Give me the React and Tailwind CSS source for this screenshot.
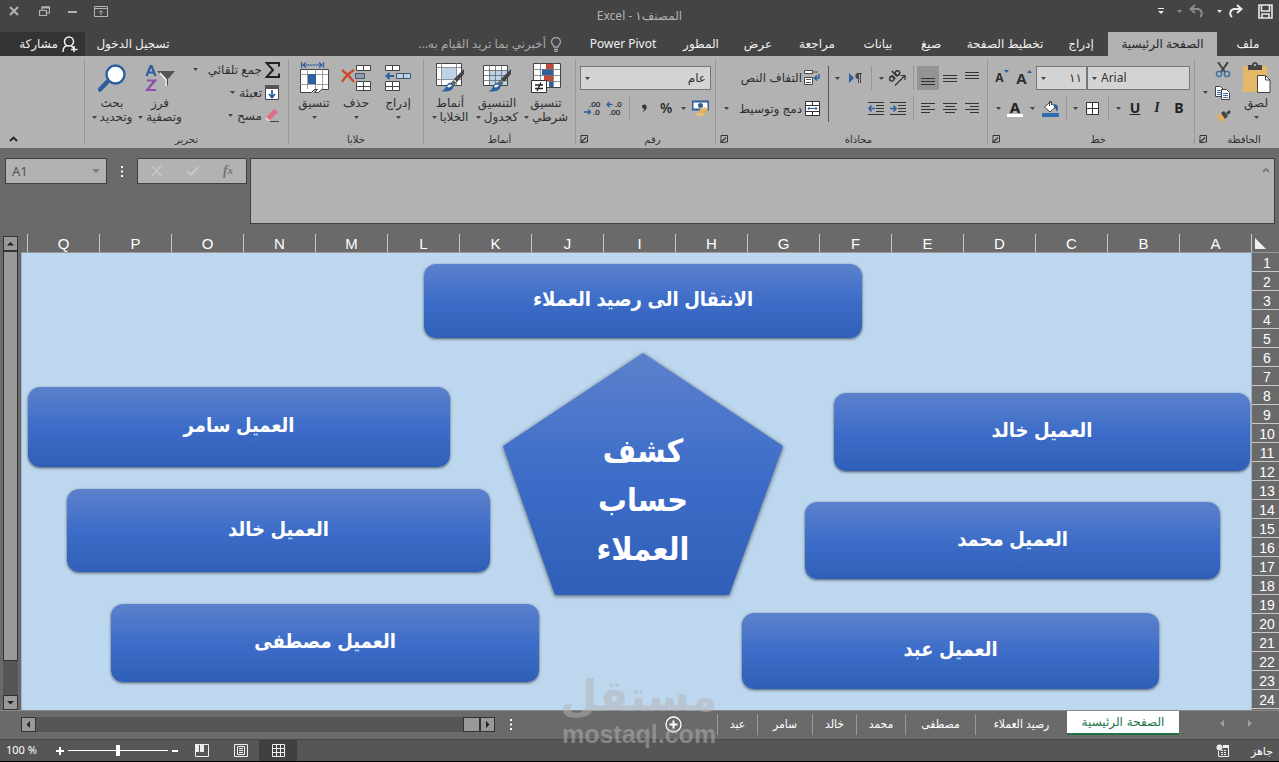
import React from "react";

const Svg = ({ w, h, children, className = "" }) => (
  <svg width={w} height={h} viewBox={`0 0 ${w} ${h}`} className={`block shrink-0 ${className}`} aria-hidden="true">
    {children}
  </svg>
);

const Caret = ({ className = "text-[#444]" }) => (
  <Svg w={5} h={3} className={className}>
    <path d="M0 0h5L2.5 3z" fill="currentColor" />
  </Svg>
);

const Btn = ({ label, className = "", children, ...rest }) => (
  <button type="button" aria-label={label} className={`flex shrink-0 items-center justify-center ${className}`} {...rest}>
    {children}
  </button>
);

const Sep = ({ className = "h-6" }) => (
  <div className="flex w-2 shrink-0 justify-center">
    <div className={`w-px bg-[#959595] ${className}`} />
  </div>
);

/* ---------- ribbon icons ---------- */

const PasteIcon = () => (
  <Svg w={29} h={32}>
    <path d="M1 4h24v26H1z" fill="#e3b867" />
    <path d="M6 3h4c0-4 6-4 6 0h4v5H6z" fill="#444" />
    <circle cx="13" cy="3" r="1.2" fill="#b2b2b2" />
    <path d="M15.500 13.500h8l4.500 4.500v12.500h-12.500z" fill="#fff" stroke="#444" />
    <path d="M23.500 13.500v4.500h4.500" fill="none" stroke="#444" />
  </Svg>
);

const CutIcon = () => (
  <Svg w={16} h={16}>
    <path d="M3 0l7 10M13 0L6 10" stroke="#444" strokeWidth="2" fill="none" />
    <circle cx="4" cy="12" r="2.600" fill="none" stroke="#3a6ea5" strokeWidth="1.400" />
    <circle cx="12" cy="12" r="2.600" fill="none" stroke="#3a6ea5" strokeWidth="1.400" />
  </Svg>
);

const CopyIcon = () => (
  <Svg w={16} h={14}>
    <path d="M.5.500h5l3 3v7h-8z" fill="#fff" stroke="#444" />
    <path d="M2 4.500h4M2 6.500h4M2 8.500h4" stroke="#3a6ea5" />
    <path d="M6.500 3.500h5l3 3v7h-8z" fill="#fff" stroke="#444" />
    <path d="M8 7.500h5M8 9.500h5M8 11.500h5" stroke="#3a6ea5" />
  </Svg>
);

const PainterIcon = () => (
  <Svg w={16} h={14}>
    <path d="M1 6l5-1 4 5-4 4c-1-3-3-5-5-8z" fill="#e3b060" />
    <path d="M6 4l3-2 4 5-3 3z" fill="#444" />
    <path d="M11 4l3-3 2 2-3 3z" fill="#444" />
  </Svg>
);

const FillIcon = () => (
  <Svg w={17} h={17}>
    <path d="M0 13h17v4H0z" fill="#2e6db0" />
    <path d="M2.500 7L8 2l5.500 5L8 12z" fill="#fff" stroke="#444" />
    <path d="M7.500 6V1.500a1.500 1.500 0 0 1 2 0V5" fill="none" stroke="#444" />
    <path d="M12 4c4 0 5 4 3 8-1-3-2-4-3-5z" fill="#2e5e98" />
  </Svg>
);

const BordersIcon = () => (
  <Svg w={13} h={13}>
    <path d="M.5.500h12v12H.5zM6.500 0v13M0 6.500h13" fill="#fff" stroke="#333" />
  </Svg>
);

const LINE_SETS = {
  top: [[0, 14, 1], [0, 14, 4], [0, 14, 7]],
  middle: [[0, 14, 4], [0, 14, 7], [0, 14, 10]],
  bottom: [[0, 14, 7], [0, 14, 10], [0, 14, 13]],
  right: [[0, 14, 2], [5, 14, 5], [0, 14, 8], [5, 14, 11]],
  center: [[0, 14, 2], [2, 12, 5], [0, 14, 8], [2, 12, 11]],
  left: [[0, 14, 2], [0, 9, 5], [0, 14, 8], [0, 9, 11]],
};

const LinesIcon = ({ kind }) => (
  <Svg w={14} h={14}>
    {LINE_SETS[kind].map(([a, b, y]) => (
      <path key={y} d={`M${a} ${y}.5H${b}`} stroke="#333" />
    ))}
  </Svg>
);

const IndentIcon = ({ out }) => (
  <Svg w={16} h={13}>
    <path d="M0 .5h16M8 3.500h8M8 6.500h8M8 9.500h8M0 12.500h16" stroke="#333" />
    <path d={out ? "M3.500 3.500L1 6.500l2.500 3M1 6.500h6" : "M3.500 3.500L6 6.500l-2.500 3M6 6.500H0"} fill="none" stroke="#2b5f9e" strokeWidth="1.600" />
  </Svg>
);

const OrientIcon = () => (
  <Svg w={17} h={16}>
    <g transform="rotate(-45 7 8)" fill="none" stroke="#333" strokeWidth="1.500">
      <circle cx="3.500" cy="5.500" r="2.200" />
      <path d="M6 3v5M9 0v8" />
      <circle cx="11.500" cy="5.500" r="2.200" />
    </g>
    <path d="M6 15.500L15.500 6M11.500 5.500H16V10" fill="none" stroke="#333" strokeWidth="1.200" />
  </Svg>
);

const RtlIcon = () => (
  <Svg w={13} h={10}>
    <path d="M0 0l5 5-5 5z" fill="#2b5f9e" />
    <path d="M9 0h4v1h-1v9h-1V1h-1v9H9V6C5.500 6 5.500 0 9 0z" fill="#444" />
  </Svg>
);

const WrapIcon = () => (
  <Svg w={16} h={16}>
    <path d="M.5.500h8v3h-8zM.5 7.500h8v7h-8z" fill="#fff" stroke="#444" />
    <path d="M2 9.500h5M2 12.500h5" stroke="#555" />
    <path d="M9 2h5" stroke="#555" />
    <path d="M15 4v4h-4M13 5.500L10.500 8l2.500 2.500" fill="none" stroke="#2b5f9e" strokeWidth="1.500" />
  </Svg>
);

const MergeIcon = () => (
  <Svg w={15} h={15}>
    <path d="M.5.500h14v14H.5zM.5 4.500h14M.5 10.500h14M7.500 0v4M7.500 11v4" fill="#fff" stroke="#333" />
    <path d="M3 7.500h9M4.500 6L3 7.500 4.500 9M10.500 6L12 7.500 10.500 9" fill="none" stroke="#2b5f9e" />
  </Svg>
);

const MoneyIcon = () => (
  <Svg w={17} h={17}>
    <path d="M.5 1.500h16v8H.5z" fill="#fff" stroke="#2e5e98" strokeWidth="2" />
    <circle cx="8.500" cy="5.500" r="2.500" fill="#2e5e98" />
    <ellipse cx="12" cy="9" rx="4" ry="1.800" fill="#e8bd7a" />
    <ellipse cx="11" cy="11.500" rx="4.500" ry="1.800" fill="#dfae67" />
    <ellipse cx="8" cy="14.500" rx="4.500" ry="1.800" fill="#e8bd7a" />
  </Svg>
);

const DecIcon = ({ less }) => (
  <Svg w={16} h={15} className="overflow-visible">
    <g direction="ltr" fontFamily="Liberation Sans, sans-serif" fontSize="8" fill="#222" stroke="#222" strokeWidth=".2">
      <text x={less ? 9 : 5} y="6">{less ? ".0" : ".00"}</text>
      <text x={less ? 3 : 9} y="14">{less ? ".00" : ".0"}</text>
    </g>
    <path
      d={less ? "M3.500 1L1 3.500 3.500 6M1 3.500h5.500" : "M4 8.500L6.500 11 4 13.500M6.500 11H0"}
      fill="none" stroke="#2b5f9e" strokeWidth="1.300"
    />
  </Svg>
);

const Brush = () => (
  <>
    <path d="M29 6v5l-7 8-3-3z" fill="#444" />
    <path d="M18.500 17l3 3-2.500 2.500-3-3z" fill="#666" />
    <path d="M6 28c5 0 4-6 8-8 3-1 6 2 4 5-2 4-8 4-12 3z" fill="#2b5f9e" />
    <path d="M12 24c1-3 3-3 5-2-1 2-3 3-5 2z" fill="#fff" />
  </>
);

const CondIcon = () => (
  <Svg w={30} h={30}>
    <path d="M2.500.500h27v24h-27z" fill="#fff" stroke="#444" />
    <path d="M15 1h7v5h-7zM13 12h9v6h-9z" fill="#c0483a" />
    <path d="M11 6h11v6H11zM18 18h4v6h-4z" fill="#2b5f9e" />
    <path d="M9.500 0v24M22.500 0v24M2 6.500h27M2 12.500h27M2 18.500h27" stroke="#777" strokeWidth=".8" />
    <path d="M.5 17.500h15v12H.5z" fill="#fff" stroke="#333" />
    <path d="M4 22h8M4 25.500h8M10 19.500L6 28" stroke="#222" strokeWidth="1.300" />
  </Svg>
);

const TableStyleIcon = () => (
  <Svg w={30} h={30}>
    <path d="M1.500 2.500h24v20h-24z" fill="#fff" stroke="#444" />
    <path d="M7 7h18v15H7z" fill="#bcd2e8" />
    <path d="M7.500 2v20M13.500 2v20M19.500 2v20M1 7.500h24M1 12.500h24M1 17.500h24" stroke="#666" strokeWidth=".8" />
    <Brush />
  </Svg>
);

const CellStyleIcon = () => (
  <Svg w={30} h={30}>
    <path d="M1.500.500h25v22h-25z" fill="#fff" stroke="#444" />
    <path d="M6.500 0v22M21.500 0v22M1 4.500h25M1 16.500h25" stroke="#777" strokeWidth=".8" />
    <path d="M7 5h14v11H7z" fill="#bcd2e8" />
    <Brush />
  </Svg>
);

const InsertIcon = () => (
  <Svg w={27} h={28}>
    <path d="M.5 1.500h14v5h-14zM7.500 1v6M.5 17.500h14v9h-14zM7.500 17v10M0 22.500h15" fill="#fff" stroke="#444" />
    <path d="M11.500 9.500h14v5h-14zM18.500 9v6" fill="#bcd2e8" stroke="#456" />
    <path d="M4.500 9L1.500 12l3 3M1.500 12H9" fill="none" stroke="#2b5f9e" strokeWidth="1.800" />
  </Svg>
);

const DeleteIcon = () => (
  <Svg w={30} h={28}>
    <path d="M15.500 1.500h14v5h-14zM22.500 1v6M15.500 17.500h14v9h-14zM22.500 17v10M15 22.500h15" fill="#fff" stroke="#444" />
    <path d="M14.500 9.500h9v5h-9z" fill="#8c9eb0" stroke="#456" />
    <path d="M1 6c4 3 9 8 12 12M13 6C8 9 4 13 1 18" fill="none" stroke="#cc4a28" strokeWidth="2.200" />
  </Svg>
);

const FormatIcon = () => (
  <Svg w={29} h={32}>
    <path d="M1.500 0v6M23.500 0v6M3 3h19M6 .5L3 3l3 2.500M19 .5L22 3l-3 2.500" fill="none" stroke="#2b5f9e" strokeWidth="1.200" />
    <path d="M.5 7.500h28v20h-7l-3 3h-4l3-3h-3l-3 3h-11z" fill="#fff" stroke="#444" />
    <path d="M7.500 7v20M15.500 7v20M22.500 7v20M0 12.500h28M0 22.500h28" stroke="#888" strokeWidth=".8" />
    <path d="M8 12h8v10H8z" fill="#2b5f9e" />
  </Svg>
);

const SigmaIcon = () => (
  <Svg w={15} h={16}>
    <path d="M14 4.500V1H1.500L8 8l-6.500 7H14v-3.500" fill="none" stroke="#222" strokeWidth="2" />
  </Svg>
);

const FillDownIcon = () => (
  <Svg w={14} h={15}>
    <path d="M.5 1.500h13v13H.5z" fill="#fff" stroke="#444" />
    <path d="M0 0h14v4H0z" fill="#555" />
    <path d="M7 5v7M4 9l3 3.500L10 9" fill="none" stroke="#2b5f9e" strokeWidth="1.800" />
  </Svg>
);

const EraserIcon = () => (
  <Svg w={14} h={13}>
    <path d="M1 8L9 0l4 3-8 8z" fill="#dc7088" />
    <path d="M1 8l4 3-1.500 1.500L0 10z" fill="#f0c4cc" />
    <path d="M5 12.500h9" stroke="#444" />
  </Svg>
);

const SortIcon = () => (
  <Svg w={30} h={28}>
    <path d="M1.500 12L5.500 2h1l4 10M3 8.500h6" fill="none" stroke="#2b5f9e" strokeWidth="2.200" />
    <path d="M2 16.500h8L2 26h9" fill="none" stroke="#8a4fa8" strokeWidth="2.200" />
    <path d="M12 7h18l-7 8v7l-3-2v-5z" fill="#555" />
    <path d="M15 9l6 6.500V22" fill="none" stroke="#fff" strokeWidth="1.500" />
  </Svg>
);

const FindIcon = () => (
  <Svg w={28} h={28}>
    <path d="M11 16L2 25.500" stroke="#2b5f9e" strokeWidth="4.500" strokeLinecap="round" />
    <circle cx="17.500" cy="10.500" r="9" fill="#fff" stroke="#2b5f9e" strokeWidth="2.400" />
  </Svg>
);

const Launcher = () => (
  <Btn label="خيارات إضافية" className="size-3">
    <Svg w={8} h={8}>
      <path d="M1 3V.5h6.500V7H5" fill="none" stroke="#333" />
      <path d="M6 2.500L2 6.500M1 3.500V7.500H5" fill="none" stroke="#333" strokeWidth="1.200" />
    </Svg>
  </Btn>
);

/* ---------- ribbon building blocks ---------- */

const Group = ({ title, width, launcher, children }) => (
  <section aria-label={title} className={`flex shrink-0 flex-col ${width}`}>
    <div className="flex grow">
      <div className="flex min-w-0 grow flex-col">
        <div className="flex h-[74px] pt-[2px]">{children}</div>
        <div className="flex h-[18px] items-center">
          <span className="grow text-center text-[10px] leading-4">{title}</span>
          {launcher && <span className="me-[2px] w-3 shrink-0"><Launcher /></span>}
        </div>
      </div>
      <div className="my-1 w-px shrink-0 bg-[#979797]" />
    </div>
  </section>
);

const Big = ({ icon, lines, caret, width }) => (
  <button type="button" className={`flex shrink-0 flex-col items-center pt-[2px] font-['DejaVu_Sans',sans-serif] leading-[14px] ${width}`}>
    <span className="flex h-9 items-center justify-center pb-px">{icon}</span>
    <span className="h-[14px] whitespace-nowrap">{lines[0]}</span>
    <span className="flex h-[14px] items-center gap-[3px] whitespace-nowrap">
      {lines[1]}
      {caret && <Caret />}
    </span>
  </button>
);

const Row = ({ icon, label, caret, far }) => (
  <button type="button" className="flex h-[23px] items-center gap-[2px] whitespace-nowrap leading-4">
    <span className="flex w-4 justify-center">{icon}</span>
    <span>{label}</span>
    {caret && <span className={far ? "ps-2" : "ps-[2px]"}><Caret /></span>}
  </button>
);

const Picker = ({ label, value, width, dir }) => (
  <div dir="ltr" className={`flex h-6 shrink-0 items-center border border-[#777] bg-[#d4d4d4] ${width}`}>
    <span className="ps-1"><Caret /></span>
    <select
      aria-label={label}
      dir={dir}
      defaultValue={value}
      className="h-full min-w-0 grow appearance-none bg-transparent px-1 text-xs leading-4 text-[#333] outline-none"
    >
      <option>{value}</option>
    </select>
  </div>
);

const RIBBON_TABS = [
  ["ملف", "w-[62px]"],
  ["الصفحة الرئيسية", "w-[109px] bg-[#b2b2b2] text-[#262626]"],
  ["إدراج", "w-[54px]"],
  ["تخطيط الصفحة", "w-[98px]"],
  ["صيغ", "w-[50px]"],
  ["بيانات", "w-[56px]"],
  ["مراجعة", "w-[66px]"],
  ["عرض", "w-[52px]"],
  ["المطور", "w-[62px]"],
  ["Power Pivot", "w-[94px]"],
];

function TitleBar() {
  return (
    <header className="flex h-8 items-start justify-between px-2 text-[#e8e8e8]">
      <div className="flex h-[22px] w-32 items-center">
        <Btn label="حفظ" className="w-3 grow-0">
          <Svg w={15} h={15}>
            <path d="M1 1h13v13H1zM3.500 1v6h8V1M4 14v-4h7v4" fill="none" stroke="currentColor" strokeWidth="1.600" />
          </Svg>
        </Btn>
        <Btn label="إعادة" className="ms-[14px] w-5">
          <Svg w={16} h={14}>
            <path d="M14 5H7a4.500 4.500 0 0 0-2 8M10 1l4.500 4L10 9" fill="none" stroke="currentColor" strokeWidth="2" />
          </Svg>
        </Btn>
        <Btn label="خيارات الإعادة" className="ms-[2px] w-2"><Caret className="text-[#e8e8e8]" /></Btn>
        <Btn label="تراجع" className="ms-[6px] w-6 text-[#8c8c8c]">
          <Svg w={16} h={14}>
            <path d="M2 5h7a4.500 4.500 0 0 1 2 8M6 1L1.500 5 6 9" fill="none" stroke="currentColor" strokeWidth="2" />
          </Svg>
        </Btn>
        <Btn label="خيارات التراجع" className="ms-[2px] w-2"><Caret className="text-[#8c8c8c]" /></Btn>
        <Btn label="تخصيص شريط الأدوات" className="ms-2 w-3">
          <Svg w={6} h={7}>
            <path d="M0 .5h6" stroke="currentColor" />
            <path d="M0 3h6L3 6z" fill="currentColor" />
          </Svg>
        </Btn>
      </div>
      <h1 className="pt-2 text-xs leading-4 text-[#b4b4b4]">المصنف١ - Excel</h1>
      <div className="flex h-[22px] w-32 items-center justify-end gap-[14px] text-[#b4b4b4]">
        <Btn label="خيارات عرض الشريط">
          <Svg w={14} h={11}>
            <path d="M.5.500h13v10H.5zM0 2.500h14M7 9V4.500M5 6.500l2-2 2 2" fill="none" stroke="currentColor" />
          </Svg>
        </Btn>
        <Btn label="تصغير" className="w-4">
          <Svg w={9} h={3}><path d="M0 2h9" stroke="currentColor" strokeWidth="2" /></Svg>
        </Btn>
        <Btn label="استعادة" className="w-3">
          <Svg w={11} h={10}>
            <path d="M.5 4.500h7v5h-7zM3 4V.8h7.500V7H8M3 2h7" fill="none" stroke="currentColor" strokeWidth="1.200" />
          </Svg>
        </Btn>
        <Btn label="إغلاق" className="ms-1 w-3">
          <Svg w={10} h={10}><path d="M1 1l8 8M9 1L1 9" stroke="currentColor" strokeWidth="2" /></Svg>
        </Btn>
      </div>
    </header>
  );
}

function TabStrip() {
  return (
    <nav className="flex h-6 text-xs text-[#f0f0f0]">
      {RIBBON_TABS.map(([name, cls]) => (
        <button type="button" key={name} className={`shrink-0 pb-px whitespace-nowrap leading-4 ${cls}`}>{name}</button>
      ))}
      <button type="button" className="ms-[14px] flex items-center gap-1 whitespace-nowrap text-[#a8a8a8]">
        <Svg w={12} h={15}>
          <path d="M4 10c0-2-2.500-2.500-2.500-5a4.500 4.500 0 0 1 9 0c0 2.500-2.500 3-2.500 5zM4 12.500h4M4.500 14.500h3" fill="none" stroke="currentColor" strokeWidth="1.300" />
        </Svg>
        أخبرني بما تريد القيام به...
      </button>
      <span className="grow" />
      <button type="button" className="w-[84px] whitespace-nowrap leading-4">تسجيل الدخول</button>
      <button type="button" className="ms-[6px] flex w-[85px] items-center justify-center gap-1 bg-[#333] ps-2 pe-5 whitespace-nowrap">
        <Svg w={16} h={17}>
          <circle cx="7" cy="5.500" r="4.500" fill="none" stroke="currentColor" strokeWidth="1.500" />
          <path d="M1 16c0-4 2-6 4-6.500M9 9.500l3 3M12 10v6M9 13.500h6.500" fill="none" stroke="currentColor" strokeWidth="1.500" />
        </Svg>
        مشاركة
      </button>
    </nav>
  );
}

function Ribbon() {
  return (
    <div className="flex h-[92px] bg-[#b2b2b2] text-xs text-[#303030]">
      <Group title="الحافظة" width="w-[85px]" launcher>
        <Big icon={<PasteIcon />} lines={["لصق", ""]} caret width="w-[46px]" />
        <div className="flex flex-col">
          <Btn label="قص" className="h-[23px] w-5"><CutIcon /></Btn>
          <div className="flex h-[23px]">
            <Btn label="نسخ" className="w-5"><CopyIcon /></Btn>
            <Btn label="خيارات النسخ" className="w-4"><Caret /></Btn>
          </div>
          <Btn label="نسخ التنسيق" className="h-[23px] w-5"><PainterIcon /></Btn>
        </div>
      </Group>

      <Group title="خط" width="w-[207px]" launcher>
        <div className="flex grow flex-col ps-1 pt-2">
          <div className="flex">
            <Picker label="خط" value="Arial" width="w-[103px]" dir="ltr" />
            <Picker label="حجم الخط" value="١١" width="w-[51px]" dir="rtl" />
            <Btn label="تكبير الخط" dir="ltr" className="w-6 items-start">
              <span className="pt-1 text-[15px] font-bold leading-4">A</span>
              <Svg w={5} h={3} className="mt-1"><path d="M0 3h5L2.500 0z" fill="#2b5f9e" /></Svg>
            </Btn>
            <Btn label="تصغير الخط" dir="ltr" className="w-5 items-start">
              <span className="pt-1 text-xs font-bold leading-4">A</span>
              <Svg w={5} h={3} className="mt-1"><path d="M0 0h5L2.500 3z" fill="#2b5f9e" /></Svg>
            </Btn>
          </div>
          <div className="flex h-6 pt-[6px] pb-0 text-sm leading-6 text-[#222] [&>button]:h-6">
            <Btn label="غامق" className="w-[22px] font-bold">B</Btn>
            <Btn label="مائل" className="w-[22px] font-['Liberation_Serif',serif] font-bold italic">I</Btn>
            <Btn label="تسطير" className="w-[22px] font-bold underline">U</Btn>
            <Btn label="خيارات التسطير" className="w-3"><Caret /></Btn>
            <Sep />
            <Btn label="حدود" className="w-6"><BordersIcon /></Btn>
            <Btn label="خيارات الحدود" className="w-[10px]"><Caret /></Btn>
            <Sep />
            <Btn label="لون التعبئة" className="w-6"><FillIcon /></Btn>
            <Btn label="خيارات التعبئة" className="w-3"><Caret /></Btn>
            <Btn label="لون الخط" className="w-[22px] flex-col">
              <span className="text-[15px] font-bold leading-[14px]">A</span>
              <span className="h-[3px] w-4 bg-white" />
            </Btn>
            <Btn label="خيارات لون الخط" className="w-3"><Caret /></Btn>
          </div>
        </div>
      </Group>

      <Group title="محاذاة" width="w-[272px]" launcher>
        <div className="flex w-[155px] shrink-0 flex-col ps-1 pt-2">
          <div className="flex h-6">
            <Btn label="محاذاة لأعلى" className="w-[22px]"><LinesIcon kind="top" /></Btn>
            <Btn label="محاذاة للوسط عموديا" className="w-[22px]"><LinesIcon kind="middle" /></Btn>
            <Btn label="محاذاة لأسفل" className="w-[22px] bg-[#949494]"><LinesIcon kind="bottom" /></Btn>
            <Sep />
            <Btn label="الاتجاه" className="w-6"><OrientIcon /></Btn>
            <Btn label="خيارات الاتجاه" className="w-2"><Caret /></Btn>
            <Sep className="ms-1 h-6" />
            <Btn label="من اليمين إلى اليسار" className="w-6 ps-1"><RtlIcon /></Btn>
            <Btn label="خيارات اتجاه النص" className="w-4"><Caret /></Btn>
          </div>
          <div className="mt-[6px] flex h-6">
            <Btn label="محاذاة لليمين" className="w-[22px]"><LinesIcon kind="right" /></Btn>
            <Btn label="توسيط" className="w-[22px]"><LinesIcon kind="center" /></Btn>
            <Btn label="محاذاة لليسار" className="w-[22px]"><LinesIcon kind="left" /></Btn>
            <Sep />
            <Btn label="زيادة المسافة البادئة" className="w-[22px]"><IndentIcon /></Btn>
            <Btn label="إنقاص المسافة البادئة" className="w-[22px]"><IndentIcon out /></Btn>
          </div>
        </div>
        <div className="flex w-2 justify-center pt-2"><div className="h-14 w-px bg-[#555]" /></div>
        <div className="flex flex-col gap-2 ps-1 pt-2">
          <Row icon={<WrapIcon />} label="التفاف النص" />
          <Row icon={<MergeIcon />} label="دمج وتوسيط" caret far />
        </div>
      </Group>

      <Group title="رقم" width="w-[140px]" launcher>
        <div className="flex grow flex-col ps-1 pt-2">
          <Picker label="تنسيق الأرقام" value="عام" width="w-[131px]" dir="rtl" />
          <div className="mt-[6px] flex h-6">
            <Btn label="تنسيق العملة" className="w-[22px]"><MoneyIcon /></Btn>
            <Btn label="خيارات العملة" className="w-3"><Caret /></Btn>
            <Btn label="نمط النسبة المئوية" className="w-[22px] text-sm font-semibold">%</Btn>
            <Btn label="نمط الفاصلة" className="w-[22px]">
              <Svg w={5} h={8}><path d="M0 2.500a2.300 2.300 0 1 1 4.600.5C4.600 5.500 3 7 .5 8 1.800 6.800 2.300 5.800 2.300 4.800A2.300 2.300 0 0 1 0 2.500z" fill="#333" /></Svg>
            </Btn>
            <Sep />
            <Btn label="إنقاص المنازل العشرية" className="w-[22px]"><DecIcon less /></Btn>
            <Btn label="زيادة المنازل العشرية" className="w-[22px]"><DecIcon /></Btn>
          </div>
        </div>
      </Group>

      <Group title="أنماط" width="w-[152px]">
        <Big icon={<CondIcon />} lines={["تنسيق", "شرطي"]} caret width="ms-1 w-[50px]" />
        <Big icon={<TableStyleIcon />} lines={["التنسيق", "كجدول"]} caret width="w-12" />
        <Big icon={<CellStyleIcon />} lines={["أنماط", "الخلايا"]} caret width="w-[46px]" />
      </Group>

      <Group title="خلايا" width="w-[135px]">
        <Big icon={<InsertIcon />} lines={["إدراج", ""]} caret width="ms-1 w-[42px]" />
        <Big icon={<DeleteIcon />} lines={["حذف", ""]} caret width="w-[42px]" />
        <Big icon={<FormatIcon />} lines={["تنسيق", ""]} caret width="w-[42px]" />
      </Group>

      <Group title="تحرير" width="w-[204px]">
        <div className="flex w-[104px] shrink-0 flex-col ps-2">
          <Row icon={<SigmaIcon />} label="جمع تلقائي" caret far />
          <Row icon={<FillDownIcon />} label="تعبئة" caret />
          <Row icon={<EraserIcon />} label="مسح" caret />
        </div>
        <Big icon={<SortIcon />} lines={["فرز", "وتصفية"]} caret width="w-12" />
        <Big icon={<FindIcon />} lines={["بحث", "وتحديد"]} caret width="w-12" />
      </Group>

      <div className="flex grow items-end justify-end px-2 pb-1">
        <Btn label="طي الشريط" className="size-[10px]">
          <Svg w={9} h={6}><path d="M1 5l3.500-3.500L8 5" fill="none" stroke="#222" strokeWidth="1.800" /></Svg>
        </Btn>
      </div>
    </div>
  );
}

const Dots = () => (
  <Svg w={2} h={11} className="text-white">
    <path d="M0 0h2v2H0zM0 4.500h2v2H0zM0 9h2v2H0z" fill="currentColor" />
  </Svg>
);

function FormulaBar() {
  return (
    <div dir="ltr" className="flex h-[86px] items-start pt-[10px] pr-1 pl-[5px]">
      <div className="flex h-[26px] w-[102px] shrink-0 items-center border border-[#3f3f3f] bg-[#b2b2b2] pr-[6px]">
        <input aria-label="Name Box" defaultValue="A1" className="h-full min-w-0 grow bg-transparent px-[6px] text-[13px] text-[#555] outline-none" />
        <Svg w={8} h={4}><path d="M0 0h8L4 4z" fill="#7d7d7d" /></Svg>
      </div>
      <div className="flex h-[26px] w-[30px] items-center justify-center"><Dots /></div>
      <div className="flex h-[26px] w-[110px] shrink-0 items-center border border-[#3f3f3f] bg-[#b2b2b2]">
        <Btn label="Cancel" className="w-9">
          <Svg w={11} h={10}><path d="M1 0l9 10M10 0L1 10" stroke="#c6c6c6" strokeWidth="1.800" /></Svg>
        </Btn>
        <Btn label="Enter" className="w-9">
          <Svg w={13} h={10}><path d="M1 5l4 4 7-8" fill="none" stroke="#c6c6c6" strokeWidth="2.400" /></Svg>
        </Btn>
        <Btn label="Insert Function" className="w-9 font-['Liberation_Serif',serif] text-sm font-bold text-[#757575] italic">
          f<span className="text-[11px]">x</span>
        </Btn>
      </div>
      <div className="ml-[3px] flex h-[66px] grow items-start border border-[#3f3f3f] bg-[#b2b2b2]">
        <textarea aria-label="Formula" className="h-full grow resize-none bg-transparent px-2 py-1 text-xs outline-none" />
        <Btn label="Collapse formula bar" className="mt-2 mr-1">
          <Svg w={8} h={6}><path d="M1 5l3-3 3 3" fill="none" stroke="#777" strokeWidth="1.800" /></Svg>
        </Btn>
      </div>
    </div>
  );
}

const COLUMNS = "ABCDEFGHIJKLMNOPQ".split("");
const ROWS = Array.from({ length: 24 }, (_, i) => i + 1);

const SHAPES = [
  ["الانتقال الى رصيد العملاء", "top-[11px] right-[389px] h-[74px] w-[438px]"],
  ["العميل سامر", "top-[134px] right-[801px] h-[80px] w-[422px]"],
  ["العميل خالد", "top-[236px] right-[761px] h-[83px] w-[423px]"],
  ["العميل مصطفى", "top-[351px] right-[712px] h-[78px] w-[428px]"],
  ["العميل خالد", "top-[140px] right-[1px] h-[78px] w-[416px]"],
  ["العميل محمد", "top-[249px] right-[31px] h-[77px] w-[415px]"],
  ["العميل عبد", "top-[360px] right-[92px] h-[76px] w-[417px]"],
];

const ScrollButton = ({ label, d }) => (
  <Btn label={label} className="size-[15px] border border-[#333] bg-[#999]">
    <Svg w={7} h={7}><path d={d} fill="#222" /></Svg>
  </Btn>
);

function Sheet() {
  return (
    <main className="flex grow font-['Liberation_Sans','DejaVu_Sans_Condensed','DejaVu_Sans',sans-serif] text-[15px] text-white">
      <div className="flex min-w-0 grow flex-col">
        <div className="flex h-[19px] border-b border-[#999]">
          <Btn label="تحديد الكل" className="w-[27px] justify-end pe-[3px]">
            <Svg w={11} h={11}><path d="M0 0v11h11z" fill="#f0f0f0" /></Svg>
          </Btn>
          <div className="flex min-w-0 grow overflow-hidden border-s border-[#c8c8c8]">
            {COLUMNS.map((c) => (
              <div key={c} className="w-[72px] shrink-0 border-e border-[#c8c8c8] text-center leading-5">{c}</div>
            ))}
          </div>
        </div>
        <div className="flex grow">
          <div className="w-[27px] shrink-0 text-sm">
            {ROWS.map((r) => (
              <div key={r} className="h-[19px] border-b border-[#c8c8c8] pe-[3px] text-center leading-5">{r}</div>
            ))}
          </div>
          <div className="relative grow overflow-hidden border-x border-[#9fb3c4] bg-[#bdd7ee]">
            {SHAPES.map(([text, cls], i) => (
              <a
                key={i}
                href="#sheet"
                className={`absolute flex items-center justify-center rounded-xl bg-linear-to-b from-[#5c81cc] via-[#3d6dc8] to-[#2f5fb8] pb-1 text-[20px] font-bold whitespace-nowrap shadow-[0_1px_3px_rgba(0,0,0,0.6)] ${cls}`}
              >
                {text}
              </a>
            ))}
            <a href="#sheet" className="absolute top-[98px] right-[466px] h-[250px] w-[284px]">
              <svg viewBox="0 0 284 250" className="absolute inset-0 size-full drop-shadow-[0_1px_2px_rgba(0,0,0,0.6)]" aria-hidden="true">
                <defs>
                  <linearGradient id="pent" x1="0" y1="0" x2="0" y2="1">
                    <stop offset="0" stopColor="#5c81cc" />
                    <stop offset=".5" stopColor="#3d6dc8" />
                    <stop offset="1" stopColor="#2f5fb8" />
                  </linearGradient>
                </defs>
                <path d="M142 2l140 93-54 149H54L2 95z" fill="url(#pent)" />
              </svg>
              <span className="relative flex flex-col items-center pt-[76px] text-[32px] leading-[49px] font-bold">
                <span>كشف</span>
                <span>حساب</span>
                <span>العملاء</span>
              </span>
            </a>
          </div>
        </div>
      </div>
      <div className="flex w-[21px] shrink-0 flex-col items-center pt-[2px]">
        <div className="flex w-[15px] grow flex-col bg-[#565656]">
          <ScrollButton label="تمرير لأعلى" d="M0 5.500L3.500 2 7 5.500z" />
          <div className="h-[410px] border border-[#333] bg-[#999]" />
          <span className="grow" />
          <ScrollButton label="تمرير لأسفل" d="M0 2L3.500 5.500 7 2z" />
        </div>
      </div>
    </main>
  );
}

const SHEET_TABS = [
  ["رصيد العملاء", "w-[92px]"],
  ["مصطفى", "w-[70px]"],
  ["محمد", "w-[49px]"],
  ["خالد", "w-[44px]"],
  ["سامر", "w-[55px]"],
  ["عبد", "w-[40px]"],
];

function SheetTabs() {
  return (
    <nav className="flex h-[29px] border-t border-[#888] font-['Noto_Sans','DejaVu_Sans_Condensed','DejaVu_Sans',sans-serif] text-xs text-white">
      <div className="flex w-[100px] shrink-0 items-center justify-center gap-6 pe-[14px] pb-1">
        <Btn label="السابق"><Svg w={4} h={7}><path d="M0 0v7l4-3.500z" fill="#a0a0a0" /></Svg></Btn>
        <Btn label="التالي"><Svg w={4} h={7}><path d="M4 0v7L0 3.500z" fill="#a0a0a0" /></Svg></Btn>
      </div>
      <button type="button" className="h-6 w-[112px] shrink-0 border-b-2 border-[#217346] bg-white font-['DejaVu_Sans',sans-serif] leading-4 whitespace-nowrap text-[#217346]">
        الصفحة الرئيسية
      </button>
      {SHEET_TABS.map(([name, cls]) => (
        <button type="button" key={name} className={`my-[3px] h-[21px] shrink-0 border-e border-[#999] pb-[2px] leading-4 whitespace-nowrap ${cls}`}>{name}</button>
      ))}
      <Btn label="ورقة جديدة" className="ms-8 h-[26px] w-6">
        <Svg w={17} h={17}>
          <circle cx="8.500" cy="8.500" r="7.500" fill="none" stroke="#fff" strokeWidth="1.300" />
          <path d="M8.500 4.500v8M4.500 8.500h8" stroke="#fff" strokeWidth="2" />
        </Svg>
      </Btn>
      <span className="grow" />
      <div dir="ltr" className="flex h-[26px] w-[493px] shrink-0 items-center pl-[2px]">
        <div className="flex h-[15px] w-[474px] bg-[#565656]">
          <ScrollButton label="تمرير لليسار" d="M5 0v7L1.500 3.500z" />
          <span className="grow" />
          <div className="w-[17px] border border-[#333] bg-[#999]" />
          <ScrollButton label="تمرير لليمين" d="M2 0v7l3.500-3.500z" />
        </div>
        <span className="grow" />
        <Dots />
      </div>
      <span className="w-[19px] shrink-0" />
    </nav>
  );
}

function StatusBar() {
  return (
    <footer className="flex h-[22px] items-center justify-between border-t border-[#484848] bg-[#565656] text-[11px] text-white">
      <div className="flex items-center gap-[22px] ps-[6px]">
        <span className="leading-4">جاهز</span>
        <Btn label="تسجيل ماكرو">
          <Svg w={13} h={13}>
            <circle cx="3.500" cy="3.500" r="3" fill="#eee" />
            <path d="M7 1h6v3H7z" fill="#eee" />
            <path d="M2.500 7v5.500h10V4M5 6.500h2M8 6.500h2M5 8.500h2M8 8.500h2M5 10.500h2M8 10.500h2" fill="none" stroke="#eee" />
          </Svg>
        </Btn>
      </div>
      <div dir="ltr" className="flex h-full items-center pl-[6px]">
        <span className="w-[46px] whitespace-nowrap">100 %</span>
        <Btn label="Zoom in" className="w-4">
          <Svg w={8} h={8}><path d="M4 0v8M0 4h8" stroke="#fff" strokeWidth="2" /></Svg>
        </Btn>
        <input
          type="range"
          aria-label="Zoom"
          min="0"
          max="100"
          defaultValue="50"
          className="h-4 w-[100px] appearance-none bg-transparent [&::-webkit-slider-runnable-track]:h-px [&::-webkit-slider-runnable-track]:bg-white [&::-webkit-slider-thumb]:-mt-[5px] [&::-webkit-slider-thumb]:h-[11px] [&::-webkit-slider-thumb]:w-1 [&::-webkit-slider-thumb]:appearance-none [&::-webkit-slider-thumb]:bg-white"
        />
        <Btn label="Zoom out" className="w-[14px]">
          <Svg w={6} h={2}><path d="M0 1h6" stroke="#fff" strokeWidth="2" /></Svg>
        </Btn>
        <Btn label="Page break preview" className="h-full w-10">
          <Svg w={14} h={13}>
            <path d="M.5.500h13v12H.5z" fill="none" stroke="#eee" />
            <path d="M0 0h4v8H0zM5 0h4v8H5z" fill="#eee" />
          </Svg>
        </Btn>
        <Btn label="Page layout" className="h-full w-[37px]">
          <Svg w={14} h={13}>
            <path d="M.5.500h13v12H.5zM3.500 2.500h7v8h-7zM5 4.500h4M5 6.500h4M5 8.500h4" fill="none" stroke="#eee" />
          </Svg>
        </Btn>
        <Btn label="Normal view" className="h-full w-[38px] bg-[#404040]">
          <Svg w={13} h={13}>
            <path d="M.5.500h12v12H.5zM4.500 0v13M8.500 0v13M0 4.500h13M0 8.500h13" fill="none" stroke="#eee" />
          </Svg>
        </Btn>
      </div>
    </footer>
  );
}

export default function App() {
  return (
    <div dir="rtl" className="relative flex min-h-screen flex-col overflow-hidden bg-[#6a6a6a] font-['Noto_Sans','DejaVu_Sans',sans-serif]">
      <div className="bg-[#444]">
        <TitleBar />
        <TabStrip />
      </div>
      <Ribbon />
      <FormulaBar />
      <Sheet />
      <SheetTabs />
      <StatusBar />
      <div className="h-px bg-black" />
      <div className="pointer-events-none absolute right-[562px] bottom-[14px] flex w-[156px] flex-col items-center font-['Liberation_Sans','DejaVu_Sans',sans-serif] font-bold text-[#b4b4b4]/50">
        <span className="text-[43px] leading-[48px]">مستقل</span>
        <span dir="ltr" className="text-[25px] leading-7">mostaql.com</span>
      </div>
    </div>
  );
}
